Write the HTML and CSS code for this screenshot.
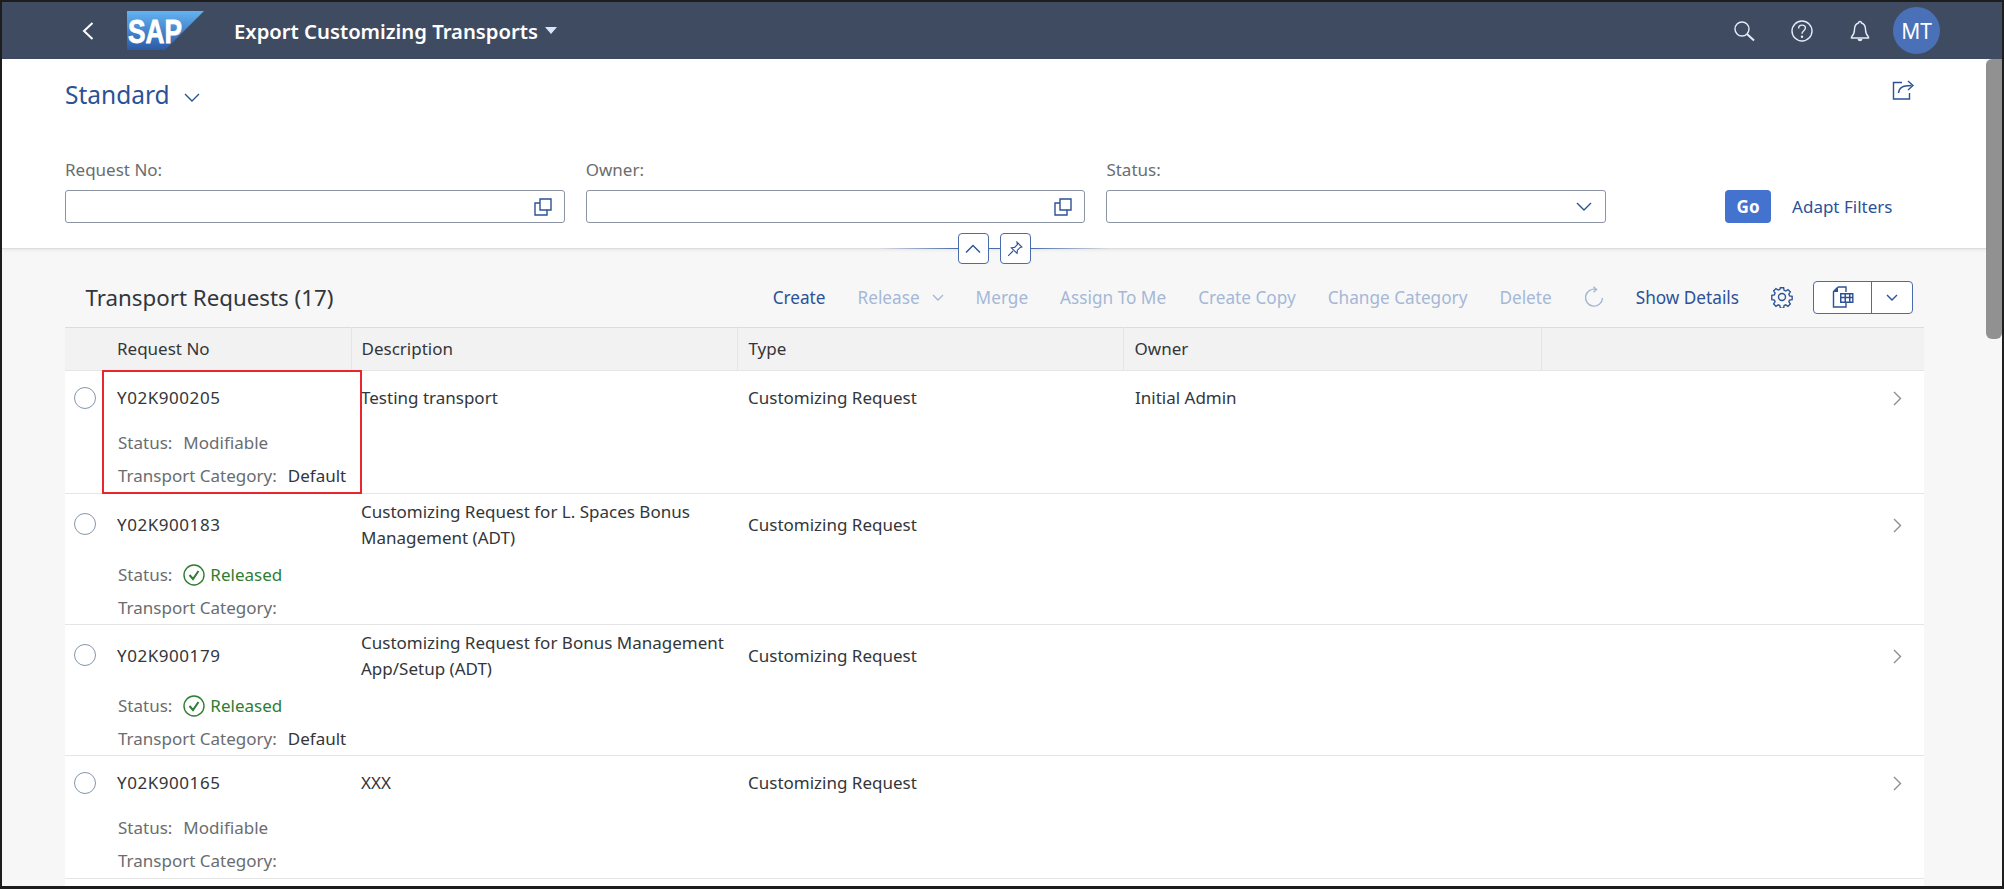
FILE: index.html
```html
<!DOCTYPE html>
<html lang="en">
<head>
    <meta charset="UTF-8">
    <title>Export Customizing Transports</title>
    <link rel="stylesheet" href="styles.css">
</head>
<body>
    <div class="frame">
        <header class="shell">
            <svg class="back" viewBox="0 0 12 18"><path d="M10.5 1 2 9l8.5 8"/></svg>
            <svg class="logo" viewBox="0 0 77 39">
                <defs>
                    <linearGradient id="sapBlue" x1="0" y1="0" x2="0" y2="1">
                        <stop offset="0" stop-color="#62b3f2"/>
                        <stop offset="1" stop-color="#2b5aa6"/>
                    </linearGradient>
                </defs>
                <path d="M0 0h77L38 39H0z" fill="url(#sapBlue)"/>
                <text x="1" y="32" textLength="54" lengthAdjust="spacingAndGlyphs" class="logo-text">SAP</text>
            </svg>
            <span class="app-title">Export Customizing Transports</span>
            <span class="app-caret"></span>
            <div class="shell-actions">
                <svg class="shell-icon" viewBox="0 0 22 22"><circle cx="9" cy="9" r="7"/><path d="m14 14 7 6.5" stroke-width="2"/></svg>
                <svg class="shell-icon" viewBox="0 0 22 22"><circle cx="11" cy="11" r="10"/><path d="M7.6 8.4c0-2 1.5-3.3 3.4-3.3s3.4 1.2 3.4 3c0 2.600-3.400 2.700-3.400 5.600"/><circle class="dot" cx="11" cy="16.800" r="1.200"/></svg>
                <svg class="shell-icon" viewBox="0 0 22 22"><path d="M11 1.500c-1 0-1.500.7-1.500 1.500C6.500 4 5.500 6.500 5.500 9.500c0 4-1 5.500-3 7.500v1h17v-1c-2-2-3-3.500-3-7.500 0-3-1-5.500-4-6.500 0-.8-.5-1.500-1.500-1.500Z"/><path class="dot" d="M8.500 19h5c-.4 1.500-1.300 2.200-2.500 2.200S8.900 20.500 8.500 19Z"/></svg>
                <span class="avatar">MT</span>
            </div>
        </header>

        <div class="workspace">
            <main class="content">
                <section class="filterbar">
                    <div class="variant-row">
                        <span class="variant">Standard</span>
                        <svg class="variant-arrow" viewBox="0 0 16 9"><path d="m1 1 7 7 7-7"/></svg>
                        <svg class="share" viewBox="0 0 22 20"><path d="M10 2.500H1.500v16.500h16v-6"/><path d="M6.500 13c.5-5 3.500-7.500 13-7.500"/><path d="m16 1 5 4.500-5 4.500"/></svg>
                    </div>
                    <div class="filter-row">
                        <label class="filter">
                            <span class="filter-label">Request No:</span>
                            <span class="input">
                                <svg class="input-icon" viewBox="0 0 18 18"><path d="M6 1h11v11H6z"/><path d="M6 5H1v12h12v-5"/></svg>
                            </span>
                        </label>
                        <label class="filter">
                            <span class="filter-label">Owner:</span>
                            <span class="input">
                                <svg class="input-icon" viewBox="0 0 18 18"><path d="M6 1h11v11H6z"/><path d="M6 5H1v12h12v-5"/></svg>
                            </span>
                        </label>
                        <label class="filter">
                            <span class="filter-label">Status:</span>
                            <span class="input">
                                <svg class="input-arrow" viewBox="0 0 16 9"><path d="m1 1 7 7 7-7"/></svg>
                            </span>
                        </label>
                        <button class="go" type="button">Go</button>
                        <span class="adapt">Adapt Filters</span>
                    </div>
                    <div class="collapse-bar">
                        <span class="collapse-line fade-left"></span>
                        <span class="collapse-btn"><svg viewBox="0 0 16 9"><path d="m1 8 7-7 7 7"/></svg></span>
                        <span class="collapse-line"></span>
                        <span class="collapse-btn"><svg viewBox="0 0 20 20"><path d="m12.500 1.500 6 6-2 .5-3.500 3.500-.5 4-7-7 4-.5L13 4.500z"/><path d="M7.500 12.500 1.500 18.500"/></svg></span>
                        <span class="collapse-line fade-right"></span>
                    </div>
                </section>

                <section class="list">
                    <div class="toolbar">
                        <h2 class="list-title">Transport Requests (17)</h2>
                        <div class="actions">
                            <span class="action">Create</span>
                            <span class="action off">Release <svg class="release-arrow" viewBox="0 0 12 7"><path d="m1 1 5 5 5-5"/></svg></span>
                            <span class="action off">Merge</span>
                            <span class="action off">Assign To Me</span>
                            <span class="action off">Create Copy</span>
                            <span class="action off">Change Category</span>
                            <span class="action off">Delete</span>
                            <svg class="refresh" viewBox="0 0 20 22"><path d="M12 3.400a8.500 8.500 0 1 0 6.500 8.600"/><path d="m9.500.8 3 2.600-3 2.800"/></svg>
                            <span class="action">Show Details</span>
                            <svg class="gear" viewBox="0 0 22 22"><circle cx="11" cy="11" r="3.500"/><path d="m9.300 1.500h3.400l.5 2.700 1.700.7 2.300-1.500 2.400 2.400-1.500 2.300.7 1.700 2.700.5v3.400l-2.700.5-.7 1.700 1.500 2.300-2.400 2.400-2.300-1.500-1.700.7-.5 2.700H9.300l-.5-2.700-1.700-.7-2.300 1.500-2.400-2.400 1.500-2.300-.7-1.700-2.700-.5V9.300l2.700-.5.7-1.700-1.500-2.300 2.400-2.400 2.300 1.500 1.700-.7z" transform="translate(.3 .3) scale(.97)"/></svg>
                            <div class="export">
                                <span class="export-main">
                                    <svg viewBox="0 0 22 22"><path d="M6 1h8v5M6 1 1.500 5.500V21H14v-4" /><path class="solid" d="M6 1v5H1.500z"/><path class="solid" d="M8 7h13.500v10H8zm1.500 1.500v2.200h3V8.500zm4.500 0v2.200h3V8.500zm4.500 0v2.200h1.600V8.500zm-9 3.700v3.300h3v-3.300zm4.500 0v3.300h3v-3.300zm4.500 0v3.300h1.600v-3.300z" fill-rule="evenodd"/></svg>
                                </span>
                                <span class="export-arrow"><svg viewBox="0 0 12 7"><path d="m1 1 5 5 5-5"/></svg></span>
                            </div>
                        </div>
                    </div>

                    <table class="requests">
                        <colgroup>
                            <col class="col-select"><col class="col-no"><col class="col-desc"><col class="col-type"><col class="col-owner"><col>
                        </colgroup>
                        <thead>
                            <tr>
                                <th></th>
                                <th>Request No</th>
                                <th>Description</th>
                                <th>Type</th>
                                <th>Owner</th>
                                <th></th>
                            </tr>
                        </thead>
                        <tbody>
                            <tr>
                                <td><span class="radio"></span></td>
                                <td class="cell-no">
                                    <div class="req-no">Y02K900205</div>
                                    <div class="meta-list">
                                        <div class="meta"><span class="meta-key">Status:</span><span class="meta-plain">Modifiable</span></div>
                                        <div class="meta"><span class="meta-key">Transport Category:</span><span class="meta-val">Default</span></div>
                                    </div>
                                    <span class="highlight"></span>
                                </td>
                                <td>Testing transport</td>
                                <td>Customizing Request</td>
                                <td>Initial Admin</td>
                                <td class="cell-nav"><svg class="nav" viewBox="0 0 9 15"><path d="m1 1 6.500 6.500L1 14"/></svg></td>
                            </tr>
                            <tr class="row-tall">
                                <td><span class="radio"></span></td>
                                <td>
                                    <div class="req-no">Y02K900183</div>
                                    <div class="meta-list">
                                        <div class="meta"><span class="meta-key">Status:</span><span class="released"><svg viewBox="0 0 22 22"><circle cx="11" cy="11" r="10"/><path d="m6.500 11 3.500 4 5.500-8" stroke-width="2"/></svg>Released</span></div>
                                        <div class="meta"><span class="meta-key">Transport Category:</span></div>
                                    </div>
                                </td>
                                <td class="cell-wrap">Customizing Request for L. Spaces Bonus Management (ADT)</td>
                                <td>Customizing Request</td>
                                <td></td>
                                <td class="cell-nav"><svg class="nav" viewBox="0 0 9 15"><path d="m1 1 6.500 6.500L1 14"/></svg></td>
                            </tr>
                            <tr class="row-tall">
                                <td><span class="radio"></span></td>
                                <td>
                                    <div class="req-no">Y02K900179</div>
                                    <div class="meta-list">
                                        <div class="meta"><span class="meta-key">Status:</span><span class="released"><svg viewBox="0 0 22 22"><circle cx="11" cy="11" r="10"/><path d="m6.500 11 3.500 4 5.500-8" stroke-width="2"/></svg>Released</span></div>
                                        <div class="meta"><span class="meta-key">Transport Category:</span><span class="meta-val">Default</span></div>
                                    </div>
                                </td>
                                <td class="cell-wrap">Customizing Request for Bonus Management App/Setup (ADT)</td>
                                <td>Customizing Request</td>
                                <td></td>
                                <td class="cell-nav"><svg class="nav" viewBox="0 0 9 15"><path d="m1 1 6.500 6.500L1 14"/></svg></td>
                            </tr>
                            <tr>
                                <td><span class="radio"></span></td>
                                <td>
                                    <div class="req-no">Y02K900165</div>
                                    <div class="meta-list">
                                        <div class="meta"><span class="meta-key">Status:</span><span class="meta-plain">Modifiable</span></div>
                                        <div class="meta"><span class="meta-key">Transport Category:</span></div>
                                    </div>
                                </td>
                                <td>XXX</td>
                                <td>Customizing Request</td>
                                <td></td>
                                <td class="cell-nav"><svg class="nav" viewBox="0 0 9 15"><path d="m1 1 6.500 6.500L1 14"/></svg></td>
                            </tr>
                        </tbody>
                    </table>
                    <div class="table-rest"></div>
                </section>
            </main>
            <div class="scrollbar"><span class="scroll-thumb"></span></div>
        </div>
    </div>
</body>
</html>
```

FILE: styles.css
```css
* {
    box-sizing: border-box;
}
html, body {
    margin: 0;
    height: 100%;
    overflow: hidden;
}
body {
    font-family: "Noto Sans", Roboto, sans-serif;
    font-size: 17px;
    color: #32363a;
}
svg {
    display: block;
    fill: none;
    stroke: currentColor;
    stroke-width: 1.4;
}
.frame {
    height: 889px;
    border: solid #1d1d1d;
    border-width: 2px 2px 3px 2px;
    display: flex;
    flex-direction: column;
    background: #f7f7f7;
    overflow: hidden;
}

/* shell header */
.shell {
    height: 57px;
    flex: none;
    background: #3f4b61;
    display: flex;
    align-items: center;
    color: #fff;
}
.back {
    width: 12px;
    height: 18px;
    margin-left: 80px;
    stroke-width: 2;
}
.logo {
    width: 77px;
    height: 39px;
    margin-left: 33px;
    stroke: none;
}
.logo-text {
    font-family: "Liberation Sans", sans-serif;
    font-size: 33px;
    font-weight: bold;
    fill: #fff;
    stroke: #fff;
    stroke-width: 0.8;
}
.app-title {
    margin-left: 30px;
    font-size: 20.25px;
    font-weight: 600;
}
.app-caret {
    margin-left: 7px;
    border: 6px solid transparent;
    border-top: 7px solid #d8e6f7;
    border-bottom: 0;
}
.shell-actions {
    margin-left: auto;
    margin-right: 62px;
    display: flex;
    align-items: center;
}
.shell-icon {
    width: 22px;
    height: 22px;
    margin-right: 36px;
    color: #e3ecf7;
}
.shell-icon .dot {
    fill: currentColor;
    stroke: none;
}
.avatar {
    width: 47px;
    height: 47px;
    margin-left: -14px;
    border-radius: 50%;
    background: #4a71b8;
    font-size: 21px;
    display: flex;
    align-items: center;
    justify-content: center;
}

.workspace {
    flex: 1;
    min-height: 0;
    display: flex;
}
.content {
    flex: 1;
    min-width: 0;
}
.scrollbar {
    width: 16px;
    flex: none;
    background: #f7f7f7;
}
.scroll-thumb {
    display: block;
    height: 280px;
    background: #919191;
    border-radius: 6px 0 6px 6px;
}

/* filter bar */
.filterbar {
    position: relative;
    height: 190px;
    padding: 17px 0 0 63px;
    background: #fff;
    border-bottom: 1px solid #dcdcdc;
    box-shadow: 0 1px 3px rgba(0, 0, 0, 0.08);
}
.variant-row {
    height: 36px;
    display: flex;
    align-items: center;
    color: #2b5296;
}
.variant {
    font-size: 24.5px;
}
.variant-arrow {
    width: 16px;
    height: 9px;
    margin: 6px 0 0 14px;
}
.share {
    width: 22px;
    height: 20px;
    margin: -9px 72px 0 auto;
}
.filter-row {
    margin-top: 47px;
    display: flex;
    align-items: flex-end;
}
.filter {
    width: 499.7px;
    margin-right: 21px;
}
.filter-label {
    display: block;
    height: 31px;
    line-height: 22px;
    color: #6a6d70;
}
.input {
    height: 33px;
    display: flex;
    align-items: center;
    justify-content: flex-end;
    border: 1px solid #8a94a3;
    border-radius: 3px;
    background: #fff;
    color: #2b5296;
}
.input-icon {
    width: 18px;
    height: 18px;
    margin-right: 12px;
}
.input-arrow {
    width: 16px;
    height: 9px;
    margin-right: 13px;
}
.go {
    width: 46px;
    height: 33px;
    margin-left: 98px;
    border: 0;
    border-radius: 4px;
    background: #4472cf;
    color: #fff;
    font: bold 17px "Noto Sans", sans-serif;
}
.adapt {
    margin-left: 21px;
    line-height: 33px;
    color: #2b5296;
}
.collapse-bar {
    position: absolute;
    left: 0;
    right: 0;
    bottom: -16px;
    display: flex;
    justify-content: center;
    align-items: center;
    color: #2b5296;
}
.collapse-btn {
    width: 31px;
    height: 31px;
    display: flex;
    align-items: center;
    justify-content: center;
    border: 1px solid #4a6cad;
    border-radius: 4px;
    background: #fff;
}
.collapse-btn svg {
    width: 16px;
    height: 16px;
}
.collapse-line {
    width: 11px;
    height: 1px;
    background: #4a6cad;
}
.fade-left {
    width: 78px;
    background: linear-gradient(to right, transparent, #4a6cad);
}
.fade-right {
    width: 78px;
    background: linear-gradient(to left, transparent, #4a6cad);
}

/* table area */
.list {
    padding: 0 62px 0 63px;
}
.toolbar {
    height: 78px;
    padding: 18px 11px 0 20.5px;
    display: flex;
    align-items: center;
}
.list-title {
    margin: 0;
    font-size: 22.3px;
    font-weight: 400;
}
.actions {
    margin-left: auto;
    display: flex;
    align-items: center;
    gap: 32px;
    color: #2b5296;
}
.action {
    display: flex;
    align-items: center;
    font-size: 17.2px;
}
.action.off {
    color: #a5b7d6;
}
.release-arrow {
    width: 12px;
    height: 7px;
    margin-left: 12px;
}
.refresh {
    width: 20px;
    height: 22px;
    color: #a5b7d6;
}
.gear {
    width: 22px;
    height: 22px;
    margin-right: -12px;
}
.export {
    width: 100px;
    height: 33px;
    display: flex;
    border: 1px solid #4a6cad;
    border-radius: 4px;
    background: #fff;
}
.export-main {
    width: 58px;
    display: flex;
    align-items: center;
    justify-content: center;
    border-right: 1px solid #4a6cad;
}
.export-main svg {
    width: 22px;
    height: 22px;
}
.export-main .solid {
    fill: currentColor;
    stroke: none;
}
.export-arrow {
    flex: 1;
    display: flex;
    align-items: center;
    justify-content: center;
}
.export-arrow svg {
    width: 12px;
    height: 7px;
}

.requests {
    width: 100%;
    table-layout: fixed;
    border-collapse: collapse;
    background: #fff;
}
.col-select { width: 44px; }
.col-no { width: 242px; }
.col-desc { width: 386px; }
.col-type { width: 386px; }
.col-owner { width: 418px; }
.requests th {
    height: 43px;
    padding: 0 0 2px 11px;
    text-align: left;
    font-weight: 400;
    background: #f2f2f2;
    border-top: 1px solid #dcdcdc;
    border-bottom: 1px solid #e5e5e5;
    border-right: 1px solid #e5e5e5;
}
.requests th:first-child {
    border-right: 0;
}
.requests th:nth-child(2) {
    padding-left: 8px;
}
.requests th:nth-child(3) {
    padding-left: 10px;
}
.requests th:last-child {
    border-right: 0;
}
.requests td {
    padding: 14px 4px 0 11px;
    line-height: 26px;
    vertical-align: top;
    border-bottom: 1px solid #e5e5e5;
}
.requests td:first-child {
    padding: 16px 0 0 9px;
}
.requests td:nth-child(2) {
    padding-left: 8px;
}
.requests td:nth-child(3) {
    padding-left: 10px;
}
.requests td:nth-child(5) {
    padding-left: 12px;
}
.requests .row-tall td {
    padding-top: 18px;
}
.requests .row-tall td:first-child {
    padding-top: 19px;
}
.requests .row-tall .cell-wrap {
    padding-top: 5px;
}
.cell-no {
    position: relative;
}
.req-no {
    letter-spacing: 0.55px;
}
.radio {
    display: block;
    width: 22px;
    height: 22px;
    border: 1.5px solid #8696a9;
    border-radius: 50%;
    background: #fff;
}
.meta-list {
    margin: 15px 0 1px;
}
.row-tall .meta-list {
    margin: 20px 0 0;
}
.meta {
    height: 33px;
    line-height: 33px;
    display: flex;
    align-items: center;
    white-space: nowrap;
}
.meta-key {
    margin-left: 1px;
    color: #6a6d70;
    margin-right: 11px;
}
.meta-plain {
    color: #6a6d70;
}
.released {
    display: flex;
    align-items: center;
    color: #2e7d32;
}
.released svg {
    width: 22px;
    height: 22px;
    margin-right: 5px;
}
.highlight {
    position: absolute;
    left: -7px;
    right: -11px;
    top: -1px;
    bottom: -1px;
    border: 2px solid #e8262c;
}
.cell-nav {
    text-align: right;
}
.nav {
    width: 9px;
    height: 15px;
    margin: 6px 18px 0 auto;
    color: #8a8f96;
}
.table-rest {
    height: 10px;
    background: #fff;
}
```
